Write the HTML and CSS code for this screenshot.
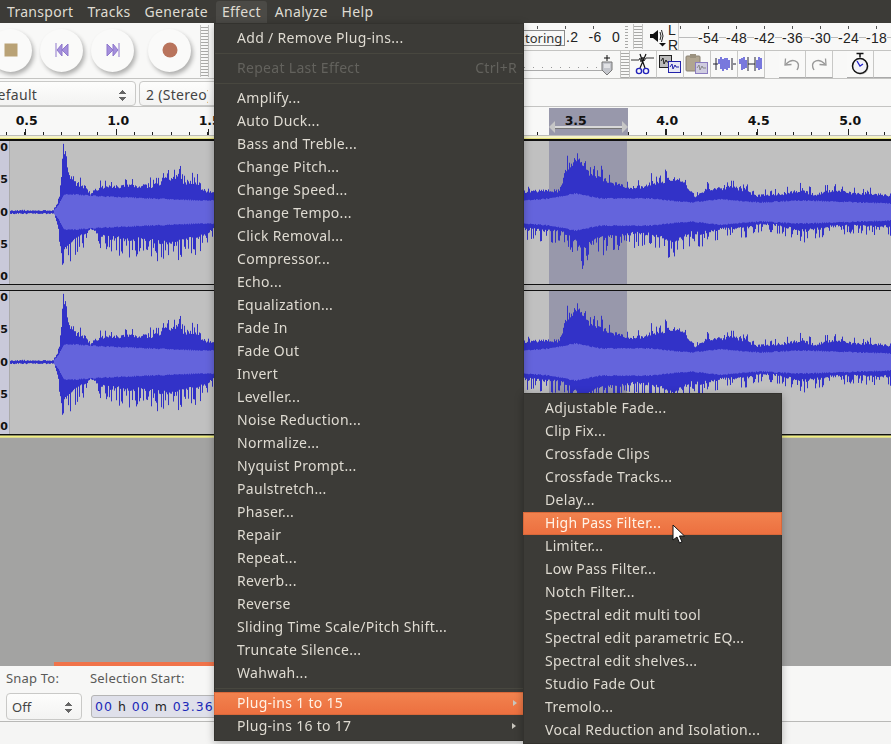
FILE: index.html
```html
<!DOCTYPE html>
<html lang="en">
<head>
<meta charset="utf-8">
<title>Audacity</title>
<link rel="stylesheet" href="styles.css">
</head>
<body>
<div class="app">
  <nav class="menubar">
    <span class="mb-item mb-transport">Transport</span>
    <span class="mb-item">Tracks</span>
    <span class="mb-item">Generate</span>
    <span class="mb-item mb-open">Effect</span>
    <span class="mb-item">Analyze</span>
    <span class="mb-item">Help</span>
  </nav>

  <section class="toolbars">
    <div class="tb-left">
      <div class="transport">
        <div class="tbtn"><svg width="14" height="14" viewBox="0 0 14 14"><rect x="0.5" y="0.5" width="13" height="13" fill="#b9a276"/></svg></div>
        <div class="tbtn"><svg width="14" height="14" viewBox="0 0 14 14"><path d="M1 0v14M2 7l5-6v12zM7 7l6-6v12z" fill="#a48fdc" stroke="#8f78cc" stroke-width="1"/></svg></div>
        <div class="tbtn"><svg width="14" height="14" viewBox="0 0 14 14"><path d="M13 0v14M12 7L7 1v12zM7 7L1 1v12z" fill="#a48fdc" stroke="#8f78cc" stroke-width="1"/></svg></div>
        <div class="tbtn tbtn-rec"><svg width="16" height="16" viewBox="0 0 16 16"><circle cx="8" cy="8" r="7.5" fill="#b9745c"/></svg></div>
      </div>
      <div class="grip grip-tall"></div>
    </div>
    <div class="tb-right">
      <div class="tb-row tb-row1">
        <button class="monitor">toring</button>
        <div class="meter-end"><span>.2</span><span>-6</span><span>0</span></div>
        <div class="grip grip-a"></div>
        <div class="grip grip-b"></div>
        <svg class="speaker" width="24" height="22" viewBox="0 0 24 22"><path d="M0 7h3l5-4v12l-5-4H0z" fill="#111"/><path d="M10 5q2 4 0 8M11.500 3q3 6 0 12" fill="none" stroke="#222"/><path d="M9 16h7l-3.500 3.500z" fill="#111"/></svg>
        <div class="lr"><span>L</span><span>R</span></div>
        <div class="meter"><span>-54</span><span>-48</span><span>-42</span><span>-36</span><span>-30</span><span>-24</span><span>-18</span></div>
      </div>
      <div class="tb-row tb-row2">
        <div class="slider"><svg width="14" height="20" viewBox="0 0 14 20"><path d="M2 7h10v8l-5 5-5-5z" fill="#c4c6cc" stroke="#777"/><path d="M7 0v6M4 3h6" stroke="#111"/><path d="M4 10h6M4 12h6" stroke="#fff"/></svg></div>
        <div class="grip grip-c"></div>
        <div class="ebtn"><svg width="24" height="24" viewBox="0 0 24 24"><path d="M0 8h8l1-2 1 4 2-5 1 4 2-3h8" fill="none" stroke="#333"/><path d="M15 2L9 16M9 2l5 14" stroke="#111" stroke-width="1.2"/><circle cx="8" cy="19" r="2.6" fill="none" stroke="#2222bb" stroke-width="1.4"/><circle cx="15" cy="19" r="2.6" fill="none" stroke="#2222bb" stroke-width="1.4"/></svg></div>
        <div class="ebtn"><svg width="24" height="24" viewBox="0 0 24 24"><rect x="1.5" y="3.500" width="12" height="12" fill="#bbb" stroke="#222"/><path d="M3 9l2-3 1 6 2-4 1 2h3" fill="none" stroke="#222"/><rect x="10.500" y="9.500" width="12" height="11" fill="#e8e8f4" stroke="#2222aa"/><path d="M12 15l2-3 1 5 2-4 1 2h3" fill="none" stroke="#2222aa"/></svg></div>
        <div class="ebtn"><svg width="24" height="24" viewBox="0 0 24 24"><rect x="1" y="4" width="14" height="15" rx="1" fill="#b0a590" stroke="#8a8272"/><rect x="5" y="2" width="6" height="4" fill="#9a917e"/><rect x="10.500" y="10.500" width="12" height="11" fill="#cfcce0" stroke="#8a7cc0"/><path d="M12 16l2-3 1 5 2-4 1 2h3" fill="none" stroke="#888"/></svg></div>
        <div class="ebtn"><svg width="24" height="24" viewBox="0 0 24 24"><path d="M1 12h5M21 12h3M4 6v12M20 6v12" stroke="#222233" fill="none"/><path d="M7 12V7M9 17V5M11 19V7M13 17V6M15 18V6M17 16V8" stroke="#2222cc" stroke-width="1.200"/></svg></div>
        <div class="ebtn"><svg width="24" height="24" viewBox="0 0 24 24"><path d="M9 12h7M9 5v14M16 5v14" stroke="#222233" fill="none"/><path d="M1 12V7M3 18V6M5 17V5M7 16V8M18 16V8M20 18V5M22 17V6" stroke="#2222cc" stroke-width="1.200"/></svg></div>
        <div class="espacer"></div>
        <div class="ebtn"><svg width="20" height="20" viewBox="0 0 20 20"><path d="M4 10q6-6 11-2 3 3 0 8" fill="none" stroke="#999" stroke-width="1.400"/><path d="M3.500 4.500L3 11l6.500-.5" fill="none" stroke="#999" stroke-width="1.300"/></svg></div>
        <div class="ebtn"><svg width="20" height="20" viewBox="0 0 20 20"><path d="M16 10q-6-6-11-2-3 3 0 8" fill="none" stroke="#999" stroke-width="1.400"/><path d="M16.500 4.500L17 11l-6.500-.5" fill="none" stroke="#999" stroke-width="1.300"/></svg></div>
        <div class="espacer"></div>
        <div class="ebtn"><svg width="24" height="24" viewBox="0 0 24 24"><path d="M8.500 1.500h7M12 1.500v4" stroke="#111" stroke-width="1.500"/><circle cx="13" cy="15" r="7.500" fill="#bbb"/><circle cx="12" cy="14" r="7.500" fill="#f4f4f8" stroke="#111" stroke-width="1.500"/><path d="M9 9l3 5 3-2" fill="none" stroke="#2222cc" stroke-width="1.300"/></svg></div>
        <div class="ebtn ebtn-last"></div>
      </div>
    </div>
    <div class="device-row">
      <div class="combo combo-a"><span class="combo-clip">Default</span><span class="updown"></span></div>
      <div class="combo combo-b"><span class="combo-cut">2 (Stereo) Recording Channels</span></div>
    </div>
  </section>

  <div class="ruler">
    <span class="sel-ruler"><i class="sel-arrow"></i></span>
    <div class="ruler-labels">
      <span>0.5</span><span>1.0</span><span>1.5</span><span>2.0</span><span>2.5</span><span>3.0</span><span>3.5</span><span>4.0</span><span>4.5</span><span>5.0</span>
    </div>
  </div>
  <div class="ruler-foot"></div>

  <div class="track">
    <div class="vruler"><span>1.0</span><span>0.5</span><span>0.0</span><span>-0.5</span><span>-1.0</span></div>
    <canvas class="wave" width="881" height="143" data-seed="17"></canvas>
  </div>
  <div class="track-gap"></div>
  <div class="track">
    <div class="vruler"><span>1.0</span><span>0.5</span><span>0.0</span><span>-0.5</span><span>-1.0</span></div>
    <canvas class="wave" width="881" height="143" data-seed="17"></canvas>
  </div>
  <div class="tracks-foot"></div>

  <div class="empty"></div>

  <footer class="selbar">
    <i class="progress"></i>
    <div class="field field-snap">
      <label>Snap To:</label>
      <div class="combo combo-snap"><span>Off</span><span class="updown"></span></div>
    </div>
    <div class="field">
      <label>Selection Start:</label>
      <div class="time"><b>00</b> h <b>00</b> m <b>03.36</b></div>
    </div>
  </footer>
  <div class="status"></div>
</div>

<div class="menu menu-effect">
  <div class="mi">Add / Remove Plug-ins...</div>
  <div class="sep"></div>
  <div class="mi mi-off"><span>Repeat Last Effect</span><span>Ctrl+R</span></div>
  <div class="sep"></div>
  <div class="mi">Amplify...</div>
  <div class="mi">Auto Duck...</div>
  <div class="mi">Bass and Treble...</div>
  <div class="mi">Change Pitch...</div>
  <div class="mi">Change Speed...</div>
  <div class="mi">Change Tempo...</div>
  <div class="mi">Click Removal...</div>
  <div class="mi">Compressor...</div>
  <div class="mi">Echo...</div>
  <div class="mi">Equalization...</div>
  <div class="mi">Fade In</div>
  <div class="mi">Fade Out</div>
  <div class="mi">Invert</div>
  <div class="mi">Leveller...</div>
  <div class="mi">Noise Reduction...</div>
  <div class="mi">Normalize...</div>
  <div class="mi">Nyquist Prompt...</div>
  <div class="mi">Paulstretch...</div>
  <div class="mi">Phaser...</div>
  <div class="mi">Repair</div>
  <div class="mi">Repeat...</div>
  <div class="mi">Reverb...</div>
  <div class="mi">Reverse</div>
  <div class="mi">Sliding Time Scale/Pitch Shift...</div>
  <div class="mi">Truncate Silence...</div>
  <div class="mi">Wahwah...</div>
  <div class="sep"></div>
  <div class="mi mi-on mi-sub"><span>Plug-ins 1 to 15</span><i class="arrow"></i></div>
  <div class="mi mi-sub"><span>Plug-ins 16 to 17</span><i class="arrow"></i></div>
</div>

<div class="menu menu-plugins">
  <div class="mi">Adjustable Fade...</div>
  <div class="mi">Clip Fix...</div>
  <div class="mi">Crossfade Clips</div>
  <div class="mi">Crossfade Tracks...</div>
  <div class="mi">Delay...</div>
  <div class="mi mi-on">High Pass Filter...</div>
  <div class="mi">Limiter...</div>
  <div class="mi">Low Pass Filter...</div>
  <div class="mi">Notch Filter...</div>
  <div class="mi">Spectral edit multi tool</div>
  <div class="mi">Spectral edit parametric EQ...</div>
  <div class="mi">Spectral edit shelves...</div>
  <div class="mi">Studio Fade Out</div>
  <div class="mi">Tremolo...</div>
  <div class="mi">Vocal Reduction and Isolation...</div>
</div>

<svg class="cursor" width="13" height="20" viewBox="0 0 13 20"><path d="M1 1v15l4-3 2.500 6 2.500-1-2.500-6h5z" fill="#fff" stroke="#111" stroke-width="1"/></svg>

<script src="waveform.js"></script>
</body>
</html>
```

FILE: styles.css
```css
* { box-sizing: border-box; }
html, body { margin: 0; height: 744px; overflow: hidden; background: #f6f6f5; }
body { position: relative; font-family: "Noto Sans", sans-serif; }
.app { display: flex; flex-direction: column; width: 891px; height: 744px; overflow: hidden; }

/* menu bar */
.menubar { display: flex; flex: none; height: 23px; background: #3c3b37; color: #dfdbd2; font-size: 14px; letter-spacing: .3px; line-height: 23px; padding-left: 1px; }
.mb-item { padding: 0 6px; margin-right: 2px; }
.mb-open { background: #4b4a46; border-radius: 3px 3px 0 0; margin-top: 1px; line-height: 21px; }

/* toolbars */
.toolbars { flex: none; display: grid; grid-template-columns: 214px 310px 367px; grid-template-rows: 56px 28px; height: 84px; background: #f8f8f7; }
.tb-left { grid-column: 1; grid-row: 1; display: flex; border-bottom: 1px solid #c4c4c2; overflow: hidden; }
.transport { display: flex; align-items: center; gap: 8px; width: 211px; margin-left: -11px; flex: none; padding-bottom: 1px; }
.tbtn { width: 43px; height: 43px; flex: none; border-radius: 50%; background: #fafaf9; box-shadow: 2px 3px 4px 0 #b0b0af; display: flex; align-items: center; justify-content: center; }
.tbtn-rec { margin-left: 6px; }
.grip { background: repeating-linear-gradient(#f8f8f7 0 2px, #a9a9a7 2px 3px); }
.grip-tall { width: 9px; flex: none; border-left: 1px solid #c4c4c2; border-right: 1px solid #c4c4c2; margin: 2px 0 1px; }
.tb-right { grid-column: 3; grid-row: 1; display: flex; flex-direction: column; }
.tb-row { display: flex; flex: none; height: 28px; border-bottom: 1px solid #c4c4c2; align-items: stretch; }
.tb-row1 { font-family: "Liberation Sans", sans-serif; font-size: 14px; color: #222; background-image: repeating-linear-gradient(90deg, transparent 0 13px, #555 13px 14px, transparent 14px 28px); background-size: 75px 3px; background-repeat: no-repeat; background-position: 0 3px; }
.monitor { width: 41px; height: 16px; margin-top: 7px; padding: 0 0 0 1px; background: #f8f8f7; border: 1px solid #8a8a8a; border-left: 0; font: 13px "Noto Sans", sans-serif; line-height: 14px; color: #333; text-align: left; }
.meter-end { width: 60px; display: flex; justify-content: space-between; padding: 6px 5px 0 1px; letter-spacing: .3px; }
.grip-a { width: 3px; margin: 1px 5px 1px 0; }
.grip-b { width: 10px; margin: 1px 0; border-left: 1px solid #c4c4c2; border-right: 1px solid #c4c4c2; }
.speaker { margin: 4px 0 0 7px; flex: none; }
.lr { width: 11px; flex: none; margin-left: -6px; display: flex; flex-direction: column; font-size: 14px; line-height: 15px; padding-top: 0; border-right: 1px solid #ccc; }
.meter { flex: 1; display: flex; gap: 7px; padding: 7px 0 0 19px; white-space: nowrap; letter-spacing: .3px; background:
  repeating-linear-gradient(90deg, transparent 0 1px, #555 1px 2px, transparent 2px 28px) 0 3px / 100% 3px no-repeat,
  linear-gradient(#bbb, #bbb) 0 14px / 100% 1px no-repeat; }
.meter span { background: #f8f8f7; width: 21px; text-align: center; height: 16px; line-height: 16px; }
.tb-row2 { height: 28px; align-items: stretch; }
.slider { width: 96px; flex: none; display: flex; justify-content: flex-end; align-items: center; padding-right: 6px; background:
  linear-gradient(#aaa, #aaa) 0 19px / 84px 1px no-repeat,
  repeating-linear-gradient(90deg, #999 0 1px, transparent 1px 9px) 0 16px / 84px 1px no-repeat; }
.grip-c { width: 10px; flex: none; border-left: 1px solid #c4c4c2; border-right: 1px solid #c4c4c2; margin-right: 0; }
.ebtn { width: 27px; flex: none; display: flex; align-items: center; justify-content: center; border-right: 1px solid #c8c8c6; border-bottom: 1px solid #aaa; background: #f9f9f8; }
.ebtn-last { width: 18px; border-right: 0; }
.espacer { width: 14px; flex: none; }
.device-row { grid-column: 1 / 4; grid-row: 2; display: flex; gap: 3px; align-items: flex-start; padding-top: 2px; border-bottom: 1px solid #c4c4c2; font-size: 14px; letter-spacing: .3px; color: #444; }
.combo { display: flex; align-items: center; height: 25px; padding-top: 2px; border: 1px solid #c9c9c7; border-radius: 4px; background: linear-gradient(#fdfdfc, #f3f3f2); position: relative; overflow: hidden; white-space: nowrap; }
.combo-a { width: 150px; margin-left: -14px; flex: none; padding-left: 0; justify-content: space-between; padding-right: 9px; }
.combo-b { width: 300px; padding-left: 6px; flex: none; }
.combo-cut { display: block; width: 62px; overflow: hidden; }
.updown { width: 7px; height: 14px; flex: none; background:
  linear-gradient(to top left, #666 50%, transparent 51%) 0 2px / 4px 4px no-repeat,
  linear-gradient(to top right, #666 50%, transparent 51%) 3px 2px / 4px 4px no-repeat,
  linear-gradient(to bottom left, #666 50%, transparent 51%) 0 9px / 4px 4px no-repeat,
  linear-gradient(to bottom right, #666 50%, transparent 51%) 3px 9px / 4px 4px no-repeat; }

/* ruler */
.ruler { flex: none; height: 28px; position: relative; overflow: hidden; background:
  repeating-linear-gradient(90deg, #222 0 1px, transparent 1px 18.3px) 6.2px 100% / 100% 3px no-repeat,
  repeating-linear-gradient(90deg, #222 0 1px, transparent 1px 91.5px) 24.5px 100% / 100% 6px no-repeat,
  #f8f8f7; }
.ruler-labels { position: relative; display: flex; margin-left: -19px; padding-top: 6px; font: bold 12.5px/16px "DejaVu Sans", sans-serif; color: #111; }
.ruler-labels span { width: 91.5px; flex: none; text-align: center; }
.sel-ruler { position: absolute; left: 549px; top: 1px; width: 79px; height: 27px; background: #9898ab; }
.sel-arrow { position: absolute; left: 5px; right: 5px; top: 18px; height: 2px; background: #d8d8d8; box-shadow: 0 1px 0 #777; }
.sel-arrow::before, .sel-arrow::after { content: ""; position: absolute; top: -5px; width: 0; height: 0; border-top: 6px solid transparent; border-bottom: 6px solid transparent; }
.sel-arrow::before { left: -5px; border-right: 6px solid #c6c6c6; }
.sel-arrow::after { right: -5px; border-left: 6px solid #c6c6c6; }
.ruler-foot { flex: none; height: 6px; background: linear-gradient(#bdbdbb 0 1px, #f4f2c8 1px 3px, #e6e27a 3px 4px, #111 4px); }

/* tracks */
.track { flex: none; display: flex; height: 143px; background: #c0c0c0; }
.vruler { width: 10px; flex: none; overflow: hidden; background: #c9c9da; border-right: 1px solid #aaa; display: flex; flex-direction: column; justify-content: space-between; align-items: flex-end; padding: 0 1px 1px 0; font: bold 11px/13px "DejaVu Sans", sans-serif; color: #111; white-space: nowrap; }
.wave { display: block; width: 881px; height: 143px; flex: none; }
.track-gap { flex: none; height: 7px; background: linear-gradient(#111 0 1px, #b4b4b4 1px 6px, #111 6px); }
.tracks-foot { flex: none; height: 4px; background: linear-gradient(#111 0 1px, #8d8d60 1px 2px, #f1ef80 2px 3px, #d8d690 3px); }

/* empty area */
.empty { flex: 1; background: #a3a3a2; }

/* selection bar */
.selbar { flex: none; height: 56px; display: flex; gap: 8px; padding: 3px 0 0 6px; position: relative; background: #f7f7f6; border-bottom: 1px solid #b9b9b7; font-size: 13px; color: #5a5a58; }
.progress { position: absolute; left: 54px; top: -4px; width: 160px; height: 4px; background: #f0734a; }
.field { display: flex; flex-direction: column; gap: 6px; flex: none; }
.field label { line-height: 18px; letter-spacing: .2px; }
.field-snap { width: 76px; }
.combo-snap { height: 27px; padding: 0 9px 0 5px; justify-content: space-between; color: #444; font-size: 13px; }
.time { width: 180px; height: 23px; margin: 2px 0 0 1px; padding-left: 3px; background: #dfe0ea; border: 1px solid #b5b5b5; border-radius: 3px; font: 12.5px/21px "DejaVu Sans", sans-serif; color: #222; letter-spacing: 1px; white-space: nowrap; }
.time b { font-weight: normal; color: #1a28b8; }
.status { flex: none; height: 22px; background: #f5f5f4; }

/* menus */
.menu { position: absolute; background: #3c3b37; color: #dfdbd2; font-size: 14px; letter-spacing: .3px; border: 1px solid #33322e; box-shadow: 0 2px 8px rgba(0,0,0,.28); }
.menu-effect { left: 214px; top: 23px; width: 310px; height: 718px; padding-top: 3px; }
.menu-plugins { left: 523px; top: 393px; width: 259px; height: 351px; padding-top: 3px; }
.mi { height: 23px; line-height: 22px; padding: 0 6px 2px 22px; white-space: nowrap; display: flex; justify-content: space-between; align-items: center; }
.mi-off { color: #63625d; }
.mi-on { background: linear-gradient(#f2834f, #ec6f3f); color: #fff2e6; box-shadow: inset 0 0 0 1px #d9683a; margin: 0 -1px; padding-left: 23px; }
.menu-plugins .mi { padding-left: 21px; }
.menu-plugins .mi-on { padding-left: 22px; }
.sep { height: 7px; background: linear-gradient(#48473f, #48473f) 0 3px / 100% 1px no-repeat; }
.mi-sub { padding-right: 10px; }
.arrow { width: 0; height: 0; border-left: 4px solid #c9c6be; border-top: 3.500px solid transparent; border-bottom: 3.500px solid transparent; margin-right: -3px; }
.cursor { position: absolute; left: 672px; top: 524px; }
```

FILE: waveform.js
```js
(function () {
  var TRACK_LEFT = 10;
  var CENTER = 71;
  var SEL_A = 549, SEL_B = 627;
  var up = [[10,1.5],[50,2],[54,4],[57,10],[60,24],[62,54],[65,68],[68,46],[72,38],[78,31],[85,29],[90,22],[100,29],[110,30],[120,30],[130,30],[140,31],[150,30],[160,33],[165,44],[170,40],[178,42],[185,33],[195,35],[205,24],[214,24],
    [524,24],[560,25],[565,48],[575,62],[582,58],[590,44],[600,40],[615,33],[625,29],[640,29],[655,35],[670,38],[680,38],[690,26],[695,17],[705,26],[730,29],[745,26],[755,19],[780,21],[800,25],[815,20],[830,25],[850,22],[870,22],[891,19]];
  var down = [[10,1.5],[50,2],[54,3],[57,20],[60,33],[62,57],[66,51],[72,42],[80,37],[90,26],[100,35],[110,40],[120,40],[130,42],[140,40],[150,44],[165,46],[175,48],[185,40],[195,42],[205,33],[214,26],
    [524,26],[560,29],[570,37],[580,53],[590,48],[600,40],[615,37],[625,33],[640,33],[655,35],[670,46],[680,42],[690,31],[700,33],[720,26],[745,24],[760,18],[780,20],[800,29],[815,26],[830,22],[850,20],[891,22]];
  var rms = [[10,1],[54,2],[57,5],[60,10],[64,17],[75,17],[100,15],[150,13],[200,11],[214,11],
    [524,11],[550,13],[575,18],[600,13],[650,13],[690,9],[720,12],[760,9],[800,11],[891,8]];

  function at(table, x) {
    for (var i = 1; i < table.length; i++) {
      if (x <= table[i][0]) {
        var a = table[i - 1], b = table[i];
        return a[1] + (b[1] - a[1]) * (x - a[0]) / (b[0] - a[0]);
      }
    }
    return table[table.length - 1][1];
  }

  function draw(canvas) {
    var seed = Number(canvas.dataset.seed);
    function rnd() { seed = (seed * 16807) % 2147483647; return seed / 2147483647; }
    var g = canvas.getContext('2d');
    g.fillStyle = '#c0c0c0';
    g.fillRect(0, 0, canvas.width, canvas.height);
    g.fillStyle = '#9898ab';
    g.fillRect(SEL_A - TRACK_LEFT, 0, SEL_B - SEL_A, canvas.height);
    for (var px = TRACK_LEFT; px < 891; px++) {
      var x = px - TRACK_LEFT;
      var t = at(up, px), b = at(down, px), r = at(rms, px);
      var top = t * (rnd() > 0.85 ? 0.95 + rnd() * 0.22 : 0.78 + rnd() * 0.14);
      var bot = b * (rnd() > 0.68 ? 0.8 + rnd() * 0.3 : 0.6 + rnd() * 0.12);
      if (px < 54) { top = 1 + rnd() * 1.2; bot = 1 + rnd() * 1.2; }
      g.fillStyle = '#3232c8';
      g.fillRect(x, CENTER - top, 1, top + bot);
      if (px >= 54) {
        g.fillStyle = '#6464dc';
        var rr = r + rnd() * 1.2;
        g.fillRect(x, CENTER - rr, 1, rr * 2);
      }
    }
  }
  Array.prototype.forEach.call(document.querySelectorAll('canvas.wave'), draw);
})();
```
